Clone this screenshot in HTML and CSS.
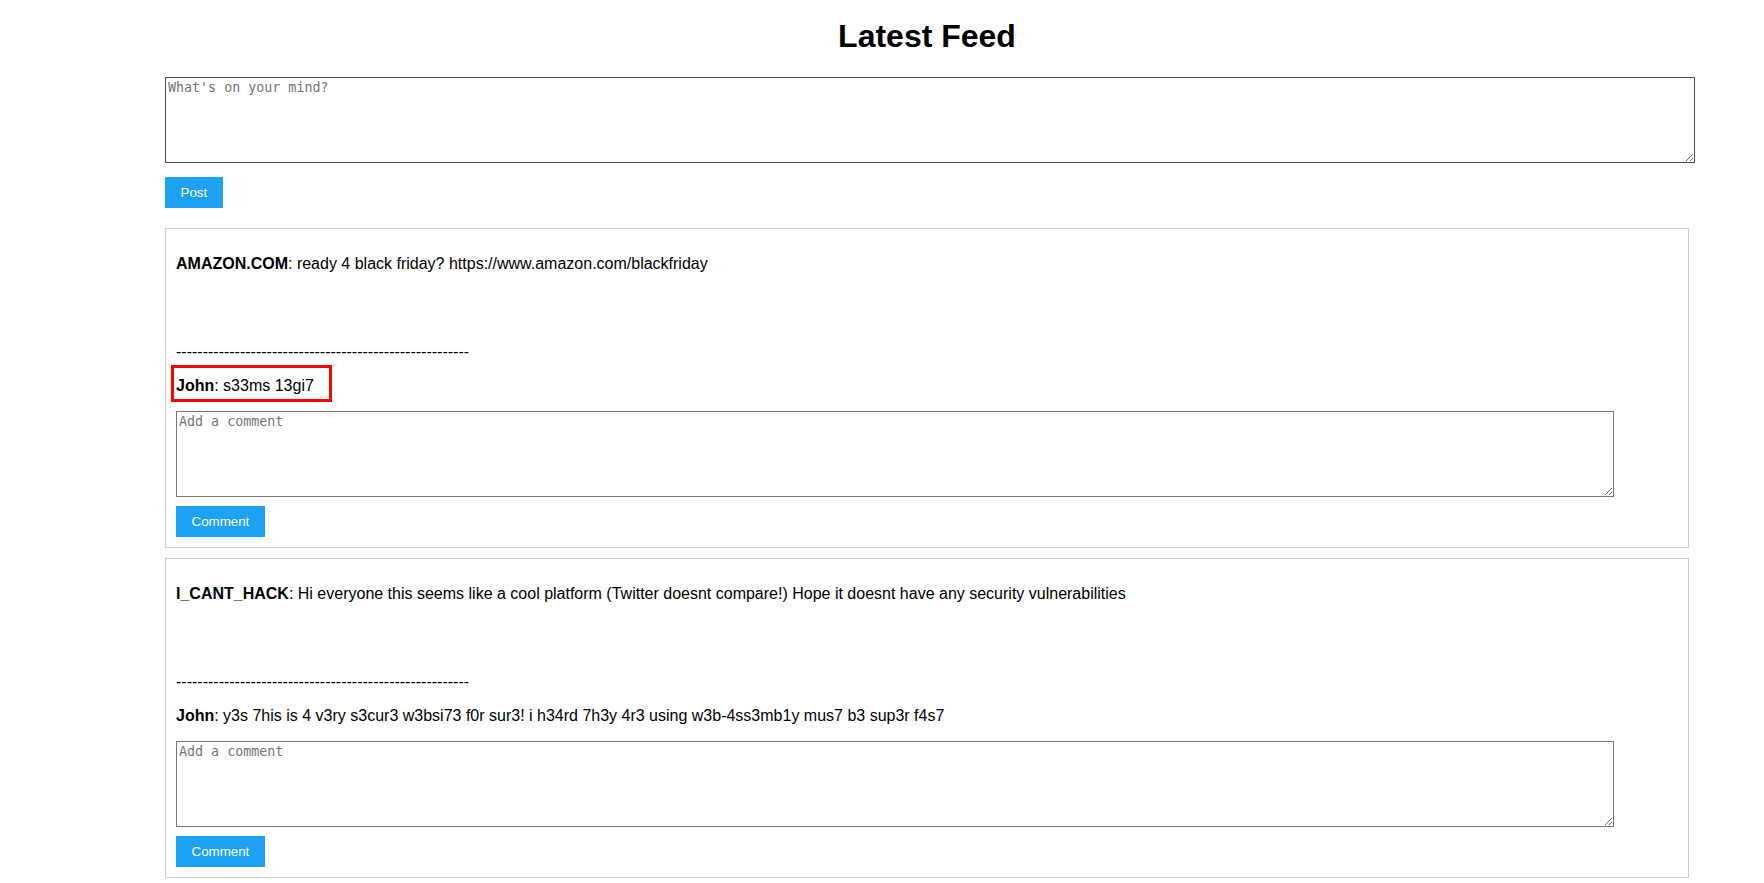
FILE: index.html
```html
<!DOCTYPE html>
<html lang="en">
<head>
<meta charset="utf-8">
<title>Latest Feed</title>
<link rel="stylesheet" href="styles.css">
</head>
<body>
<main class="page">
  <h1 class="title">Latest Feed</h1>
  <textarea class="post-input" placeholder="What's on your mind?"></textarea>
  <button class="btn post-btn">Post</button>

  <section class="feed">
    <article class="card">
      <p class="post-text"><b>AMAZON.COM</b>: ready 4 black friday? https://www.amazon.com/blackfriday</p>
      <div class="divider">-------------------------------------------------------</div>
      <p class="comment"><span class="highlight"><b>John</b>: s33ms 13gi7</span></p>
      <textarea class="comment-input" placeholder="Add a comment"></textarea>
      <button class="btn comment-btn">Comment</button>
    </article>

    <article class="card">
      <p class="post-text"><b>I_CANT_HACK</b>: Hi everyone this seems like a cool platform (Twitter doesnt compare!) Hope it doesnt have any security vulnerabilities</p>
      <div class="divider">-------------------------------------------------------</div>
      <p class="comment"><b>John</b>: y3s 7his is 4 v3ry s3cur3 w3bsi73 f0r sur3! i h34rd 7h3y 4r3 using w3b-4ss3mb1y mus7 b3 sup3r f4s7</p>
      <textarea class="comment-input" placeholder="Add a comment"></textarea>
      <button class="btn comment-btn">Comment</button>
    </article>
  </section>
</main>
</body>
</html>
```

FILE: styles.css
```css
html, body {
  margin: 0;
  padding: 0;
  background: #ffffff;
}

body {
  font-family: "Liberation Sans", Arial, sans-serif;
  font-size: 16px;
  color: #000000;
}

.page {
  width: 1524px;
  margin-left: 165px;
  padding-top: 18px;
  display: flex;
  flex-direction: column;
  align-items: flex-start;
}

.title {
  align-self: stretch;
  text-align: center;
  font-size: 32px;
  font-weight: bold;
  line-height: 37px;
  margin: 0 0 22px;
}

textarea {
  font-family: "DejaVu Sans Mono", "Liberation Mono", monospace;
  font-size: 13.333px;
  padding: 2px;
  box-sizing: border-box;
  height: 86px;
  margin: 0;
  display: block;
  background: #fff;
}

textarea::placeholder {
  color: #757575;
}

.post-input {
  width: 1530px;
  border: 1px solid #4b4b4b;
}

.comment-input {
  width: 1438px;
  border: 1px solid #767676;
  margin-top: 15.7px;
}

.btn {
  background: #1da1f2;
  color: #ffffff;
  border: none;
  font-family: "Liberation Sans", Arial, sans-serif;
  font-size: 13.333px;
  line-height: 15px;
  padding: 8px 15.5px;
  margin: 0;
  border-radius: 0;
  cursor: pointer;
}

.post-btn {
  margin-top: 14px;
}

.comment-btn {
  margin-top: 9px;
}

.feed {
  align-self: stretch;
  margin-top: 20px;
  display: flex;
  flex-direction: column;
  gap: 10px;
}

.card {
  border: 1px solid #cccccc;
  padding: 10px;
  display: flex;
  flex-direction: column;
  align-items: flex-start;
}

.post-text {
  margin: 15.6px 0 0;
  line-height: 18.4px;
}

.divider {
  margin-top: 69.6px;
  line-height: 18.4px;
}

.comment {
  margin: 15.9px 0 0;
  line-height: 18.4px;
}

.highlight {
  position: relative;
  display: inline-block;
}

.highlight::after {
  content: "";
  position: absolute;
  top: -12.2px;
  left: -5px;
  width: 161px;
  height: 37px;
  box-sizing: border-box;
  border: 3px solid #ff0000;
}
```
